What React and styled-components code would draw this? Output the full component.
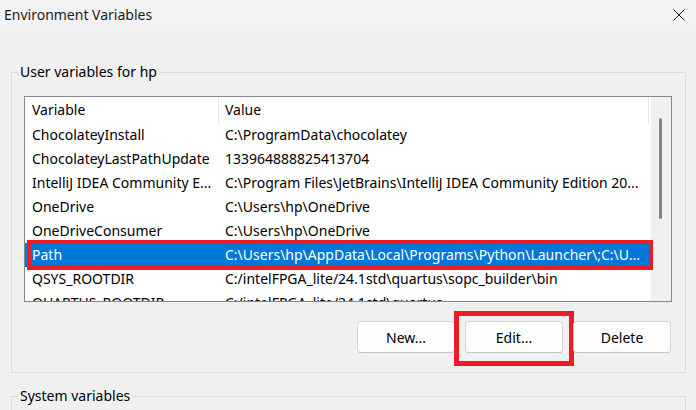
import React from "react";
import styled, { createGlobalStyle, css } from "styled-components";

const GlobalStyle = createGlobalStyle`
  html, body { margin: 0; padding: 0; background: #f0f0f0; }
  body {
    font-family: "Noto Sans", "Open Sans", sans-serif;
    width: 696px; height: 410px; overflow: hidden;
    -webkit-font-smoothing: antialiased;
  }
  * { box-sizing: border-box; }
`;

const Window = styled.div`
  width: 696px;
  height: 410px;
  display: flex;
  flex-direction: column;
  overflow: hidden;
  background: #f0f0f0;
`;

const TitleBar = styled.div`
  height: 31px;
  flex: none;
  display: flex;
  align-items: center;
  justify-content: space-between;
  padding: 0 10px 2px 4px;
  background: #f3f3f3;
`;

const Title = styled.span`
  font-size: 14px;
  color: #1b1b1b;
`;

const CloseButton = styled.span`
  display: flex;
  width: 14px;
  height: 14px;
  align-items: center;
  justify-content: center;
`;

const Content = styled.div`
  padding: 31px 10px 0 11px;
  display: flex;
  flex-direction: column;
  gap: 13px;
`;

const Group = styled.fieldset`
  margin: 0;
  min-width: 0;
  border: 1px solid #dcdcdc;
  padding: 14px 13px 19px 12px;
`;

const Legend = styled.legend`
  margin-left: -6px;
  padding: 0 2px;
  font-size: 14px;
  line-height: 20px;
  color: #000;
`;

const ListBox = styled.div`
  height: 206px;
  border: 1px solid #828790;
  background: #fff;
  display: flex;
  overflow: hidden;
`;

const Table = styled.div`
  flex: 1;
  display: flex;
  flex-direction: column;
  min-width: 0;
`;

const cols = css`
  display: grid;
  grid-template-columns: 194px 430px;
`;

const HeaderRow = styled.div`
  ${cols};
  height: 26px;
  flex: none;
`;

const HeaderCell = styled.div`
  border-right: 1px solid #e5e5e5;
  padding-left: ${(p) => (p.$first ? 7 : 6)}px;
  font-size: 14px;
  line-height: 26px;
  color: #000;
  white-space: nowrap;
  overflow: hidden;
`;

const Row = styled.div`
  ${cols};
  height: 24px;
  flex: none;
  position: relative;
  background: ${(p) => (p.$selected ? "#0078d7" : "transparent")};
  color: ${(p) => (p.$selected ? "#fff" : "#000")};
  ${(p) =>
    p.$marked &&
    css`
      &::after {
        content: "";
        position: absolute;
        top: -3px;
        bottom: -3px;
        left: 2px;
        right: -2px;
        border: 4px solid #ed1c24;
        z-index: 2;
      }
    `}
`;

const Cell = styled.div`
  padding-left: ${(p) => (p.$first ? 7 : 6)}px;
  font-size: 14px;
  line-height: 24px;
  white-space: nowrap;
  overflow: hidden;
`;

const ScrollTrack = styled.div`
  width: 20px;
  flex: none;
  background: #f0f0f0;
  padding: 21px 0 0 8px;
`;

const ScrollThumb = styled.div`
  width: 3px;
  height: 101px;
  border-radius: 2px;
  background: #858585;
`;

const ButtonRow = styled.div`
  display: flex;
  justify-content: flex-end;
  gap: 10px;
  margin-top: 19px;
  margin-right: 1px;
`;

const Button = styled.div`
  position: relative;
  width: 98px;
  height: 32px;
  display: flex;
  align-items: center;
  justify-content: center;
  background: #fdfdfd;
  border: 1px solid #d3d3d3;
  border-bottom-color: #c4c4c4;
  border-radius: 4px;
  font-size: 14px;
  color: #000;
  ${(p) =>
    p.$marked &&
    css`
      &::after {
        content: "";
        position: absolute;
        top: -11px;
        bottom: -14px;
        left: -12px;
        right: -12px;
        border: 5px solid #ed1c24;
      }
    `}
`;

const rows = [
  ["ChocolateyInstall", "C:\\ProgramData\\chocolatey"],
  ["ChocolateyLastPathUpdate", "133964888825413704"],
  ["IntelliJ IDEA Community E...", "C:\\Program Files\\JetBrains\\IntelliJ IDEA Community Edition 20..."],
  ["OneDrive", "C:\\Users\\hp\\OneDrive"],
  ["OneDriveConsumer", "C:\\Users\\hp\\OneDrive"],
  ["Path", "C:\\Users\\hp\\AppData\\Local\\Programs\\Python\\Launcher\\;C:\\U...", true],
  ["QSYS_ROOTDIR", "C:/intelFPGA_lite/24.1std\\quartus\\sopc_builder\\bin"],
  ["QUARTUS_ROOTDIR", "C:/intelFPGA_lite/24.1std\\quartus"],
];

export default function App() {
  return (
    <Window>
      <GlobalStyle />
      <TitleBar>
        <Title>Environment Variables</Title>
        <CloseButton>
          <svg width="12" height="12" viewBox="0 0 12 12">
            <path d="M0.5 0.5 L11.5 11.5 M11.5 0.5 L0.5 11.5" stroke="#1b1b1b" strokeWidth="1" fill="none" />
          </svg>
        </CloseButton>
      </TitleBar>
      <Content>
        <Group>
          <Legend>User variables for hp</Legend>
          <ListBox>
            <Table>
              <HeaderRow>
                <HeaderCell $first>Variable</HeaderCell>
                <HeaderCell>Value</HeaderCell>
              </HeaderRow>
              {rows.map(([name, value, sel]) => (
                <Row key={name} $selected={sel} $marked={sel}>
                  <Cell $first>{name}</Cell>
                  <Cell>{value}</Cell>
                </Row>
              ))}
            </Table>
            <ScrollTrack>
              <ScrollThumb />
            </ScrollTrack>
          </ListBox>
          <ButtonRow>
            <Button>New...</Button>
            <Button $marked>Edit...</Button>
            <Button>Delete</Button>
          </ButtonRow>
        </Group>
        <Group>
          <Legend>System variables</Legend>
        </Group>
      </Content>
    </Window>
  );
}
